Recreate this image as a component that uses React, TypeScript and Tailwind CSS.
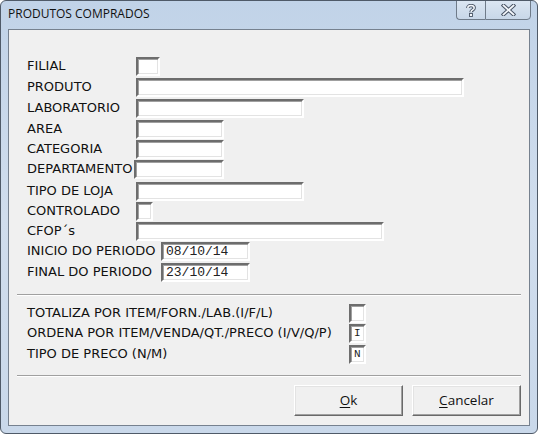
import React from "react";

// Sunken edit box, Win classic style
const Edit = ({
  w,
  value = "",
  className = "",
  textClass = "text-[13px]",
}: {
  w: number;
  value?: string;
  className?: string;
  textClass?: string;
}) => (
  <div
    className={`h-[19px] bg-white border-2 border-t-[#6d6d6d] border-l-[#6d6d6d] border-b-white border-r-white shadow-[inset_1px_1px_0_#a0a0a0,inset_-1px_-1px_0_#e3e3e3] flex items-center pl-[3px] leading-none text-[#222] ${className}`}
    style={{ width: w }}
  >
    <span className={`font-['Liberation_Mono',monospace] ${textClass}`}>{value}</span>
  </div>
);

const rows: { label: string; labelW: number; inputW: number; h: number; value?: string }[] = [
  { label: "FILIAL", labelW: 109, inputW: 24, h: 21 },
  { label: "PRODUTO", labelW: 109, inputW: 328, h: 21 },
  { label: "LABORATORIO", labelW: 109, inputW: 168, h: 21 },
  { label: "AREA", labelW: 109, inputW: 88, h: 20 },
  { label: "CATEGORIA", labelW: 109, inputW: 88, h: 20 },
  { label: "DEPARTAMENTO", labelW: 107, inputW: 90, h: 22 },
  { label: "TIPO DE LOJA", labelW: 109, inputW: 168, h: 20 },
  { label: "CONTROLADO", labelW: 109, inputW: 17, h: 20 },
  { label: "CFOP´s", labelW: 109, inputW: 248, h: 20 },
  { label: "INICIO DO PERIODO", labelW: 134, inputW: 89, h: 21, value: "08/10/14" },
  { label: "FINAL DO PERIODO", labelW: 134, inputW: 89, h: 20, value: "23/10/14" },
];

const options: { label: string; value: string; h: number }[] = [
  { label: "TOTALIZA POR ITEM/FORN./LAB.(I/F/L)", value: "", h: 20 },
  { label: "ORDENA POR ITEM/VENDA/QT./PRECO (I/V/Q/P)", value: "I", h: 21 },
  { label: "TIPO DE PRECO (N/M)", value: "N", h: 20 },
];

const Separator = () => (
  <div className="mx-[8px] h-[2px] border-t border-t-[#a0a0a0] border-b border-b-white" />
);

const Button = ({ hot, rest }: { hot: string; rest: string }) => (
  <button
    type="button"
    className="w-[109px] h-[31px] bg-[#f0f0f0] border border-t-white border-l-white border-b-[#696969] border-r-[#696969] shadow-[inset_-1px_-1px_0_#a0a0a0,inset_1px_1px_0_#e3e3e3] text-[13.5px] text-[#111] font-['Open_Sans',sans-serif] flex items-center justify-center"
  >
    <span className="underline underline-offset-2 decoration-1">{hot}</span>
    <span>{rest}</span>
  </button>
);

export default function App() {
  return (
    <div className="w-[538px] h-[434px] flex flex-col rounded-[6px] border border-[#4f5a68] bg-gradient-to-b from-[#c1d3e8] via-[#d0dded] to-[#c9d8ea] font-['DejaVu_Sans',sans-serif] overflow-hidden">
      {/* title bar */}
      <div className="h-[28px] flex items-start justify-between shrink-0">
        <span className="pl-[7px] pt-[7px] text-[12px] leading-none text-[#111] font-['Open_Sans',sans-serif]">
          PRODUTOS COMPRADOS
        </span>
        <div className="flex mr-[6px] -mt-px">
          <div className="w-[29px] h-[20px] border border-[#6f7b89] border-r-0 rounded-bl-[4px] bg-gradient-to-b from-[#dbe6f2] to-[#c8d7e8] flex items-center justify-center">
            <svg width="10" height="13" viewBox="0 0 10 13">
              <path d="M1.8 4 C1.8 0.8 8.2 0.8 8.2 4 C8.2 6 5 6 5 8.2" fill="none" stroke="#4a5566" strokeWidth="3.4" />
              <path d="M1.8 4 C1.8 0.8 8.2 0.8 8.2 4 C8.2 6 5 6 5 8.2" fill="none" stroke="#f4f7fb" strokeWidth="1.5" />
              <rect x="3.5" y="9.5" width="3" height="3" fill="#f4f7fb" stroke="#4a5566" strokeWidth="0.9" />
            </svg>
          </div>
          <div className="w-[46px] h-[20px] border border-[#6f7b89] rounded-br-[4px] bg-gradient-to-b from-[#dbe6f2] to-[#c8d7e8] flex items-center justify-center">
            <svg width="15" height="12" viewBox="0 0 15 12">
              <path d="M2.5 1.5 L12.5 10.5 M12.5 1.5 L2.5 10.5" stroke="#4a5566" strokeWidth="3.8" strokeLinecap="square" />
              <path d="M2.5 1.5 L12.5 10.5 M12.5 1.5 L2.5 10.5" stroke="#f4f7fb" strokeWidth="1.8" strokeLinecap="square" />
            </svg>
          </div>
        </div>
      </div>

      {/* client area */}
      <div className="flex-1 mx-[7px] mb-[7px] bg-[#f0f0f0] border border-[#76818f] flex flex-col text-[13px] text-[#111]">
        <div className="pt-[27px] pl-[18px] flex flex-col">
          {rows.map((r) => (
            <div key={r.label} className="flex items-start" style={{ height: r.h }}>
              <span className="whitespace-nowrap leading-[18px]" style={{ width: r.labelW }}>{r.label}</span>
              <Edit w={r.inputW} value={r.value} />
            </div>
          ))}
        </div>

        <div className="mt-[11px]">
          <Separator />
        </div>

        <div className="pt-[8px] pl-[18px] flex flex-col">
          {options.map((o) => (
            <div key={o.label} className="flex items-start" style={{ height: o.h }}>
              <span className="w-[322px] whitespace-nowrap leading-[18px]">{o.label}</span>
              <Edit w={17} value={o.value} className="pl-[2px]" textClass="text-[11px]" />
            </div>
          ))}
        </div>

        <div className="mt-[10px]">
          <Separator />
        </div>

        <div className="flex justify-end gap-[9px] pr-[8px] pt-[8px]">
          <Button hot="O" rest="k" />
          <Button hot="C" rest="ancelar" />
        </div>
      </div>
    </div>
  );
}
